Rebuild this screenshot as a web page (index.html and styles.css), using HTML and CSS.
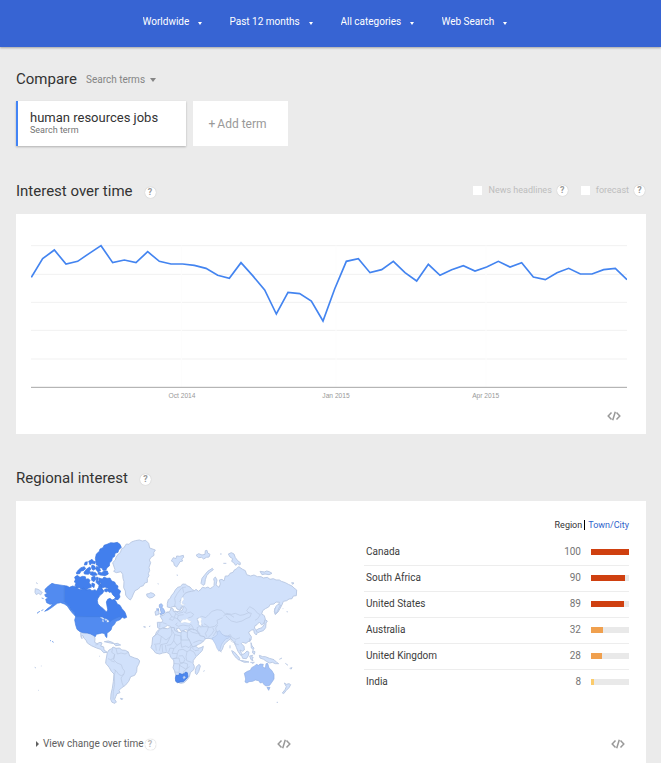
FILE: index.html
```html
<!DOCTYPE html>
<html lang="en">
<head>
<meta charset="utf-8">
<meta name="viewport" content="width=device-width, initial-scale=1">
<title>Trends</title>
<link rel="stylesheet" href="styles.css">
</head>
<body>
<svg width="0" height="0" class="defs" aria-hidden="true">
  <symbol id="code" viewBox="0 0 14 10"><path d="M4.5 1.5 1.2 5l3.3 3.5M9.500 1.500 12.800 5l-3.300 3.500M8.300 .8 5.700 9.200" fill="none" stroke="currentColor" stroke-width="1.500"/></symbol>
</svg>
<header class="topbar">
  <span class="filter"><select aria-label="Location"><option>Worldwide</option></select></span>
  <span class="filter"><select aria-label="Time range"><option>Past 12 months</option></select></span>
  <span class="filter"><select aria-label="Category"><option>All categories</option></select></span>
  <span class="filter"><select aria-label="Search type"><option>Web Search</option></select></span>
</header>
<main>
  <section>
    <div class="compare-head">
      <h2>Compare</h2>
      <span class="filter kind"><select aria-label="Compare by"><option>Search terms</option></select></span>
    </div>
    <div class="terms">
      <button class="term"><span class="term-name">human resources jobs</span><span class="term-kind">Search term</span></button>
      <button class="add"><span class="plus">+</span>Add term</button>
    </div>
  </section>

  <section>
    <div class="head">
      <h2>Interest over time</h2><button class="help">?</button>
      <div class="options">
        <input type="checkbox" id="news"><label for="news">News headlines</label><button class="help">?</button>
        <input type="checkbox" id="forecast"><label for="forecast">forecast</label><button class="help">?</button>
      </div>
    </div>
    <div class="panel trend">
      <svg class="chart" viewBox="0 0 1788 480" role="img" aria-label="Interest over time">
        <path class="grid" d="M0 17H1788M0 103H1788M0 187H1788M0 271H1788M0 357H1788"/>
        <path class="grid faint" d="M451 17V442M915 17V442M1365 17V442"/>
        <path class="axis" d="M0 442H1788"/>
        <polyline class="line" points="1,112 35,56 70,30 105,72 140,64 175,40 210,17 245,68 280,60 315,68 350,35 385,64 420,72 455,72 490,76 525,85 560,106 595,115 630,68 665,107 701,150 736,222 771,157 806,161 841,183 876,243 911,147 946,64 982,56 1017,98 1052,89 1087,64 1122,98 1157,123 1192,73 1227,106 1262,89 1297,77 1332,93 1367,81 1402,64 1437,81 1472,68 1507,111 1543,119 1578,98 1613,85 1648,102 1683,102 1718,89 1753,85 1788,119"/>
        <text x="453" y="474">Oct 2014</text><text x="915" y="474">Jan 2015</text><text x="1364" y="474">Apr 2015</text>
      </svg>
      <div class="foot"><button class="embed" aria-label="Embed"><svg><use href="#code"/></svg></button></div>
    </div>
  </section>

  <section class="regional">
    <div class="head"><h2>Regional interest</h2><button class="help">?</button></div>
    <div class="panel regions">
      <div class="col">
        <svg class="map" viewBox="0 0 825 540" role="img" aria-label="World map">
          <g class="land">
            <path d="M248 98l8-8 2-8 7-10 6-4 4-12 6-2 8-12 8 1 7-7 12-4 12-2 9 3 10-2 9 9 3 14 17 6-5 8 1 8-9 6-5 8 4 8-5 14 2 9-4 10 2 6-5 8v12l-8 2-4 8-9 3-6 7-10 5-5 10-4 10-5 8-8-6-6-9-1-12-5-10 1-18-3-10-1-12-5-8-14 3-8-4 4-5z"/>
            <path d="M350 192l7-1 5-3 9 3 4 5-7 6-9 2-8-5z"/>
            <path d="M152 308l18 2 10-1 12 9 3 8-1 11 7 4 9-4 6 2-4 9 9 3 1 9 10 7-11 1-9-10-12-4-16-7-12-8-4-9-7-6-1-6-5-2 1 10-3-5z"/>
            <path d="M16 176l8 2 8 5 5 6-5 5-7-4-6 4-4-7z"/>
            <path d="M223 335l12-2 12 4 6 4-12-2zM252 342l10-2 10 5-15 2zM361 288l-4 2M342 290l5 1"/>
            <path d="M232 368L237 360 245 356 249 351 258 355 269 354 275 360 286 361 295 366 299 378 314 384 324 387 329 393 326 403 321 411 320 425 314 436 302 440 296 454 286 466 274 474 267 481 270 488 261 491 257 500 254 508 259 516 255 520 246 517 242 508 243 492 247 475 250 455 252 432 244 424 238 413 231 404 227 400 228 390z"/>
            <path d="M271 505l7 1-3 4zM383 161l3 1M18 158l5 3M14 412l4 2M34 407v2M24 481h2M207 378l2 1"/>
          </g>
          <path class="borders" d="M248 355l-3 12 9 6-3 12-9 4-8-3M258 355l4 17 11-3 12 3 12-6M254 373l-3 16 10 10 13 5 4 12 6 7-2 9-8 5-8-4-7-10-8-5M242 392l12 4M257 420l-4 15 1 28-4 22-1 24M282 432l-9 12 3 14 4 10M196 345l9-2M212 348l8 2"/>
          <g class="ca">
            <path d="M196 85l3-13 9-8 2-7 9-4 3-7 11-4 9-4 10 1 10-2 8 6 4 9-8 8-2 7-9 3-1 9-7 5-2 9-6 5-1 10-7 5-3 7-9 1-3-7-9-1-4-7-4-1-1-9z"/>
            <path d="M176 94l10-6 5 6 6 1-3 7-8-2-6 5zM165 97l7-2-1 9-8 1zM139 128l6-8 8-7 10-3 4 6-7 6-7 1-4 8-9 1zM162 127l8-10 9-6 4 6-5 6 5 4-8 6-12-1zM186 105l8 3 3 8-8 5-5-8zM200 109l8 4 4 9-9 3-6-8zM205 125l10 3 8-6 9 1 3 9-9 5-16-2-6-3zM185 125l12 3 5 7-14 2-8-4z"/>
            <path d="M134 141l8-5 8 6 7-3 9 1 2 8 7-2 5 5-3 8 6 5 1 8-9 3-6 5-7-4-8 2-6-5-8 1-5-8 3-7-5-3 3-7zM185 142l9-4 4 9-6 8-7-4zM200 141l5 2-2 10 8 5-6 6-7-7zM207 144l10 3 5-6 9 4 9-1 5 9 9 3 4 8 6 4-1 8 9 7-4 10 2 8-6 8-11-1 3-6-8-8-4-8-7 1-5-7 3-4-10-5-8 3-8-7 4-9-7-3zM204 176l9-4 5 7-8 5zM186 159l8 3-2 11-7-5z"/>
            <path d="M103 167L111 168 118 172 128 168 138 171 146 177 155 179 160 174 168 180 180 178 186 182 195 179 200 183 206 172 208 160 213 165 215 178 222 182 218 190 210 196 204 205 202 212 204 222 212 230 220 236 226 243 231 246 233 238 231 228 229 216 233 208 240 205 246 210 252 208 258 214 262 222 270 226 276 236 284 245 287 252 290 262 283 265 277 262 268 270 274 262 262 264 252 272 240 277 236 270 226 268 215 262 137 260 133 248 124 240 118 230 110 222 103 216z"/>
            <path d="M224 178l6-2 5 5-5 5-6-2z"/>
          </g>
          <g class="us">
            <path d="M45 178L55 168 66 160 75 163 84 164 103 167 103 216 110 222 118 230 124 240 133 248 137 259 128 250 120 240 112 228 103 222 92 218 82 220 74 226 66 232 54 240 44 244 52 236 62 229 68 222 60 223 50 218 47 208 55 203 47 200 44 194 52 190 46 186z"/>
            <path d="M30 244l-8 4M40 239l-6 3M22 250l3-2M35 204l6 2M60 331l3 2M66 334l5 3"/>
            <path d="M137 260L213 260 222 264 230 270 229 278 240 275 246 270 258 264 268 260 274 262 268 270 258 274 254 282 246 290 243 300 236 306 231 309 231 318 230 323 226 318 224 311 216 309 208 311 199 313 196 320 190 316 182 312 172 309 160 308 150 305 141 298 137 285 134 270z"/>
          </g>
          <path class="sea" d="M211 262l8 1 5 5-7-2zM219 268l2 8-4-2zM225 266l7 3-5 3z"/>
          <g transform="translate(330 0)">
            <g class="land">
              <path d="M94 93l6-10 8 3 2-8 9 1 11-3 1 6-6 5 3 6-8 2-4 7-6 9-7-5-2-9zM168 76l8-5 10 4 9-2 1-11 5-1 2 8 7 4-3 8-8 1-8 5-6-5-9 1zM265 72l9-4 8 4 4 11 7 9 8 6-1 7-7-4-6 5-6-8-6-4 3-8-8-5zM183 160l3-15 8-10 9-11 14-9 3 4-12 9-8 9-4 12-2 14-5 3zM360 124l13 2 7-3 8 2 8 5-9 4-12-2-9 2zM455 158l7 1-4 4zM110 135l4 1M240 72h5M250 100h9M272 152h2"/>
              <path d="M82 220l3-11 6-4 3-8 7-8 5-9 7-8 8-2 7-8 9 1 4 4 9 4 7 8 7 3-1 7-9 2-10 9-5 12-3 6-8 7-3 9-5 7-9-4-5-9-7 2-8 3-9-2z"/>
              <path d="M135 190L144 186 154 184 164 182 168 178 175 184 183 178 187 172 196 174 204 171 210 176 217 172 222 167 223 155 221 146 226 141 231 150 228 165 237 172 241 162 238 150 246 148 252 153 256 138 265 138 270 130 279 127 282 121 290 116 296 110 308 118 316 122 320 134 332 138 342 135 352 140 363 140 370 144 382 142 390 148 400 146 408 150 418 150 424 154 436 158 445 163 456 168 462 174 470 180 469 197 460 198 456 206 447 207 440 212 430 214 427 222 421 234 414 246 406 254 403 244 405 234 414 226 419 217 408 216 402 222 391 223 386 231 376 236 368 242 365 252 373 257 376 268 372 279 365 285 358 276 351 284 345 287 343 295 349 299 352 308 349 315 343 309 341 299 335 300 326 306 328 312 334 320 333 330 324 335 318 340 308 337 304 341 312 349 313 360 308 364 300 360 305 371 302 376 294 364 289 352 285 341 281 334 272 326 266 331 257 338 251 346 247 358 242 364 236 359 231 345 225 335 219 328 207 325 190 326 177 316 169 308 161 302 152 296 146 302 137 299 124 304 117 294 109 296 114 307 115 316 108 311 104 301 97 297 91 289 82 286 76 291 68 294 63 298 53 293 52 277 66 277 68 271 60 258 70 256 77 248 84 247 91 242 93 234 100 237 99 243 111 245 126 242 130 233 126 224 120 214 126 204 130 197z"/>
              <path d="M45 245l6-4 6 3-1 9-9 3z"/>
              <path d="M38 322l8-7 4-10 8-7 9-3 16 1 9-4 11 1 1 8 9 5 8 2 7-5 11 3 8 1 4 10 6 10 5 11 6 11 6 6 9-2 7-4-3 12-9 10-9 8-9 12-1 9 4 9-1 9-11 10-3 12-6 9-10 9-9 2-7-2-4-12-5-11-3-12-5-10 3-12-1-11-9-8-3-10-9-5-12 2-9 3-12-3-7-9-7-7 3-10z"/>
              <path d="M142 306l5-7 9-2 12 3 7 9 5 8 13 3 3 7-9 10-11 6-10 5-8 3-5-9-4-10-7-11zM166 422l3-11 8-8 4 5-5 17-6 9-4-4z"/>
              <path d="M348 302l6-5 12-4 6-9 1-8 2-7 7 4-4 6-1 14-7 9-10 3-6 3zM404 240l4-11 6-6 8 3-6 9-3 9-8 7zM329 326l3 3-3 6zM333 338l3 10 6 6-2 5-6-5zM338 362l7 3-2 8-5-4zM275 362l8 4 9 10 7 9-1 6-9-7-9-11zM300 391l13 2 14 3-14 1zM304 374l8-2 9-9 6 4-2 10-6 9-11-1zM329 378l9-2-3 5 5 2-4 3 3 6-6-3zM358 376l10 4 8 0 12 5 14 4 8 8 6 4-10 0-9-4-8 2-10-5-8-6-11-4zM331 397l12 0-6 4M418 388l8-4M436 400l8 6M449 415l7-2-3 5M433 459l6 4 8-2 5 3-5 9-8 8-8 10-4-2 8-10 4-9zM240 362l5 4M270 346v9M410 517h4M441 243l1 4M428 236h2M10 290l6 2M190 424l4-2"/>
            </g>
            <path class="borders" d="M103 232l3-15-2-12 8-15 14-17 12-2M128 174l3 14M175 280l-4-14 14-7 12 4 9-9 10-10 15-5 14 2 12 12 13 1 12 8M250 258l10-8 14 3 12-3 14 6 12-2 14-6 8 2-4 11-12 5-12 7-16 4-16-4-10-8-7-8M328 250l-8-8 9-12 14 8 10 12 8 4-8 12-8 5M172 266l5 10-3 8 10 6 14 0 12 2 14-3 9-8-2-10 17-8M190 290l-6-8-5 2M207 292l-9-8-6-3M184 293l-5-4-8 4 2 10 8 10M205 292l-3 10-6 8 4 10M218 293l4 8-6 10-12 12M233 285l-6 9 2 10 8 6 14 7 12 1 8-4 4 8 12 6 13-5M229 303l-9 15M270 318l4 16 8 4 6 4 8 2M286 332l-3 12M112 278l-5 6 8 5 14-4 16 3 8-5 6 10 2 8M130 245l10 5 11-4 10 7-6 8-9 2-9 8M80 244l10 6 5 10 8 2 4-11-6-9M95 260l-7 8 10 3 6-8 10 4 8 8M106 242l9 8 14-3M107 251l8 5 16-2M115 256l-3 11 8 8 8-4 6 4M68 278l12 4M60 278l-1 14M120 240l2-8 12-2 6 8-3 9M150 289l-5 10 12 8 16 4M160 338l18-7 12 3"/>
            <path class="borders" d="M58 300l-6 12-12 8M52 312l12 7 14 11 13-10 5-8-2-18M64 319l-4 22-18 2M96 300l8 14 19 4 0 20M123 305v25h26M91 320l-10 20-19 4-4 18M104 314l-3 18-8 12-13 2M101 332l10 14 12-8 2 14 12-4 10 5 9-12M111 346l-9 10-12-2-4 12M47 345l2 17M66 344l2 22M76 345l3 19M102 356l-6 14 16 1 4-11 13-2 12 7 9-5 12 6 6 12M150 360l3-10 12 12 12-2M112 371l-2 12-12 4M116 378l12-1 7 11-5 10-10 0-3-14-19 2M141 365l-3 15 2 12 15 5M100 400l19 2 12-4 12 4-2 14-10 8 0 14M119 402l-2 26M117 405l20 12 12-7M103 426l14 1"/>
            <path class="sea" d="M172 268l8-6 6 5-3 6 2 8-3 8-6-6 1-7zM122 275l7-7 7 1 5-4 5 6 9 4-7 5-14-3-10 3zM124 205l5-5 3 8-6 9 2 6 8-1-8 5-7-5z"/>
            <path class="gb" d="M58 224l6-3 4 5-2 6 5 5 4 9-4 5-9 3-3-2 5-5-3-6 1-5-4-5zM48 237l8-1-1 7"/>
            <path class="in" d="M231 306l8-4 6 10 12 7 13 0-5 6-7 1-8 9-6 9-3 12-4 8-6-9-5-13-6-10-4-8 8-3 8-8z"/>
            <path class="za" d="M108 436l9 0 1-6 8 3 6-2 5-5 5 2 2 12-5 7-9 8-9 1-9 2-5-4-1-10z"/><path class="in" d="M129 441l5-2 2 4-5 3z"/>
            <path class="au" d="M313 430l9-6 9-3 4-8 9-5 5-5 7 3 4-4 10 1-2 7 8 5 2-14 5-1 4 14 8 7 7 12v14l-6 9-7 10-11 2-7-5-3-6-7 2-5-7-10-2-8 4-11 1-6 4-6-3 2-9zM381 472h9l-4 9z"/>
          </g>
        </svg>
        <div class="foot">
          <button class="change"><span class="tri"></span>View change over time</button><button class="help flat">?</button>
          <button class="embed" aria-label="Embed map"><svg><use href="#code"/></svg></button>
        </div>
      </div>
      <div class="col">
        <div class="tabs"><a class="current">Region</a><a href="#city">Town/City</a></div>
        <table>
          <tr><th scope="row">Canada</th><td>100</td><td class="meter"><div class="bar"><i class="high" style="width:100%"></i></div></td></tr>
          <tr><th scope="row">South Africa</th><td>90</td><td class="meter"><div class="bar"><i class="high" style="width:90%"></i></div></td></tr>
          <tr><th scope="row">United States</th><td>89</td><td class="meter"><div class="bar"><i class="high" style="width:87%"></i></div></td></tr>
          <tr><th scope="row">Australia</th><td>32</td><td class="meter"><div class="bar"><i class="mid" style="width:32%"></i></div></td></tr>
          <tr><th scope="row">United Kingdom</th><td>28</td><td class="meter"><div class="bar"><i class="mid" style="width:28%"></i></div></td></tr>
          <tr><th scope="row">India</th><td>8</td><td class="meter"><div class="bar"><i class="low" style="width:8%"></i></div></td></tr>
        </table>
        <div class="foot"><button class="embed" aria-label="Embed table"><svg><use href="#code"/></svg></button></div>
      </div>
    </div>
  </section>
</main>
</body>
</html>
```
FILE: styles.css
```css
* { box-sizing: border-box; }
body {
  margin: 0;
  background: #ebebeb;
  color: #3c3c3c;
  font: 10px/16px Roboto, "Liberation Sans", sans-serif;
}
.defs { position: absolute; }
button, select { font: inherit; color: inherit; border: 0; background: none; padding: 0; margin: 0; }
select { appearance: none; }
h2 { margin: 0; font-size: 15px; line-height: 20px; font-weight: 400; color: #333; }

.topbar {
  display: flex;
  justify-content: center;
  align-items: center;
  gap: 28px;
  height: 47px;
  padding: 0 12px 3px 0;
  background: #3764d3;
  color: #fff;
  box-shadow: 0 1px 2px rgba(0, 0, 0, .3);
}
.filter { display: flex; align-items: center; gap: 8px; }
.filter::after {
  content: "";
  margin-top: 2px;
  border: 2px solid transparent;
  border-top: 3px solid currentColor;
  border-bottom: 0;
}

main { padding: 22px 15px 0 16px; }
.compare-head { display: flex; align-items: center; gap: 9px; margin-bottom: 12px; }
.kind { gap: 4px; color: #858585; padding-top: 2px; }
.kind::after { margin-top: 0; border-width: 4px 3px 0; }
.terms { display: flex; gap: 7px; height: 45px; margin-bottom: 35px; }
.term {
  display: flex;
  flex-direction: column;
  justify-content: center;
  width: 170px;
  padding: 0 0 2px 12px;
  border-left: 2px solid #4384f5;
  background: #fff;
  text-align: left;
  box-shadow: 0 1px 2px rgba(0, 0, 0, .25);
}
.term-name { font-size: 13px; line-height: 16px; color: #333; }
.term-kind { font-size: 9px; line-height: 9px; color: #757575; }
.add { width: 95px; padding-right: 6px; background: #fff; color: #999; font-size: 12px; }
.plus { margin-right: 2px; }

.head { display: flex; align-items: center; height: 20px; margin-bottom: 13px; }
.help {
  width: 11px;
  height: 11px;
  margin: 3px 0 0 12px;
  border-radius: 50%;
  background: #fff;
  color: #999;
  font-size: 9px;
  line-height: 11px;
  font-weight: 700;
  text-align: center;
  box-shadow: 0 0 1px #aaa;
}
.options { display: flex; align-items: center; margin-left: auto; padding: 0 1px 2px 0; font-size: 9px; color: #bdbdbd; }
.options input { appearance: none; width: 9px; height: 9px; margin: 0 6px 0 13px; background: #fff; }
.options .help { margin: 0 0 0 5px; }

.panel { background: #fff; }
.trend { height: 220px; padding: 26px 19px 0 15px; margin-bottom: 34px; }
.chart { display: block; width: 100%; }
.grid { stroke: #f1f1f1; stroke-width: 3; }
.faint { stroke: #fdfdfd; }
.axis { stroke: #a6a6a6; stroke-width: 3; }
.line { fill: none; stroke: #4384f0; stroke-width: 5; }
.chart text { font: 20px "Liberation Sans", sans-serif; fill: #999; text-anchor: middle; }

.foot { display: flex; align-items: center; height: 16px; color: #606060; }
.trend .foot { margin-top: 8px; padding-right: 6px; }
.embed { margin-left: auto; width: 14px; height: 10px; color: #999; }
.embed svg { display: block; width: 14px; height: 10px; }

.regions { display: grid; grid-template-columns: 275fr 265fr; gap: 59px; padding: 16px 17px 11px 14px; }
.col { display: flex; flex-direction: column; }
.col .foot { margin-top: auto; }
.map { display: block; width: 100%; margin: 13px 0 26px; }
.map path { stroke-width: 2; stroke-linejoin: round; }
.land path { fill: #d1e1fb; stroke: #bccbe5; stroke-width: 3; }
.map .borders { fill: none; stroke: #b9c8e2; }
.ca path { fill: #427fed; stroke: #3d77df; }
.us path { fill: #528bf0; stroke: #447fe2; }
.map .za { fill: #4b86ef; stroke: #3d73d5; }
.map .au { fill: #a2c1f8; stroke: #90aee2; }
.map .gb { fill: #a5c3f7; stroke: #87a6de; }
.map .in { fill: #c5d9fa; stroke: #b2c6e8; }
.map .sea { fill: #fff; stroke: #c3d0e8; stroke-width: 1; }
.col:first-child .foot { padding: 0 14px 0 6px; }
.col:last-child .foot { padding-right: 4px; }
.change { display: flex; align-items: center; gap: 4px; }
.tri { border: 3px solid transparent; border-left: 3px solid #606060; border-right: 0; }
.flat { margin: 1px 0 0 1px; color: #bbb; }

.tabs { display: flex; justify-content: flex-end; font-size: 9px; line-height: 10px; margin: 3px 0 9px; }
.tabs a { text-decoration: none; color: #2f64cb; }
.tabs .current { color: #333; border-right: 1px solid #000; padding-right: 2px; margin-right: 3px; }
table { width: 100%; border-collapse: collapse; }
tr + tr { border-top: 1px solid #ededed; }
th, td { height: 26px; padding: 0; }
th { padding-left: 2px; text-align: left; font-weight: 400; }
td { text-align: right; color: #757575; }
.meter { width: 48px; padding-left: 10px; }
.bar { height: 6px; background: #e9e9e9; }
.bar i { display: block; height: 6px; }
.high { background: #cf4010; }
.mid { background: #f0a04e; }
.low { background: #fbcb6b; }
```
